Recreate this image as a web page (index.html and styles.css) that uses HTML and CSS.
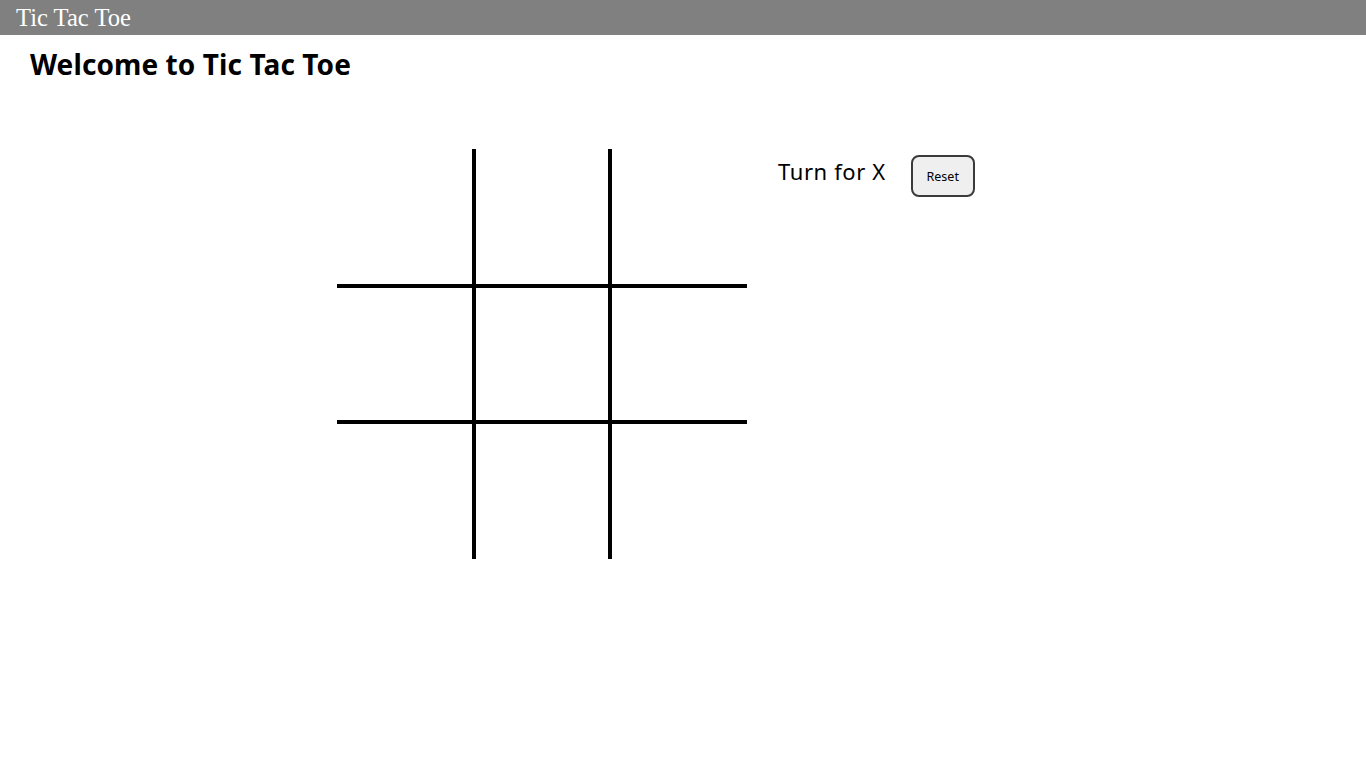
FILE: index.html
```html
<!DOCTYPE html>
<html>
<head>
<meta charset="utf-8">
<title>Tic Tac Toe</title>
<link rel="stylesheet" href="styles.css">
</head>
<body>
<nav class="navbar">Tic Tac Toe</nav>
<h1 class="title">Welcome to Tic Tac Toe</h1>
<main class="game">
  <div class="board">
    <div class="cell"></div>
    <div class="cell col-mid"></div>
    <div class="cell"></div>
    <div class="cell row-mid"></div>
    <div class="cell col-mid row-mid"></div>
    <div class="cell row-mid"></div>
    <div class="cell"></div>
    <div class="cell col-mid"></div>
    <div class="cell"></div>
  </div>
  <div class="info">
    <span class="turn">Turn for X</span>
    <button class="reset">Reset</button>
  </div>
</main>
</body>
</html>
```
FILE: styles.css
```css
html, body {
  margin: 0;
  padding: 0;
  background: #fff;
}
.navbar {
  height: 35px;
  background: #808080;
  color: #fff;
  font-family: "Liberation Serif", serif;
  font-size: 24.6px;
  line-height: 35px;
  padding-left: 16px;
}
.title {
  margin: 12px 0 0 30px;
  font-family: "Noto Sans", sans-serif;
  font-weight: 700;
  font-size: 28px;
  line-height: 34px;
  letter-spacing: 0.1px;
  color: #000;
}
.game {
  display: flex;
  align-items: flex-start;
  margin: 68px 0 0 337px;
  gap: 31px;
}
.board {
  display: grid;
  grid-template-columns: 135px 140px 135px;
  grid-template-rows: 135px 140px 135px;
}
.cell {
  box-sizing: border-box;
}
.col-mid {
  border-left: 4px solid #000;
  border-right: 4px solid #000;
}
.row-mid {
  border-top: 4px solid #000;
  border-bottom: 4px solid #000;
}
.info {
  display: flex;
  align-items: flex-start;
  gap: 25px;
  margin-top: 7px;
}
.turn {
  font-family: "Noto Sans", sans-serif;
  font-size: 22px;
  letter-spacing: 0.6px;
  color: #000;
}
.reset {
  width: 64px;
  height: 42px;
  margin-top: -1px;
  box-sizing: border-box;
  background: #efefef;
  border: 2px solid #3a3a3a;
  border-radius: 8px;
  font-family: "Noto Sans", sans-serif;
  font-size: 12.5px;
  color: #000;
  padding: 0;
}
```
